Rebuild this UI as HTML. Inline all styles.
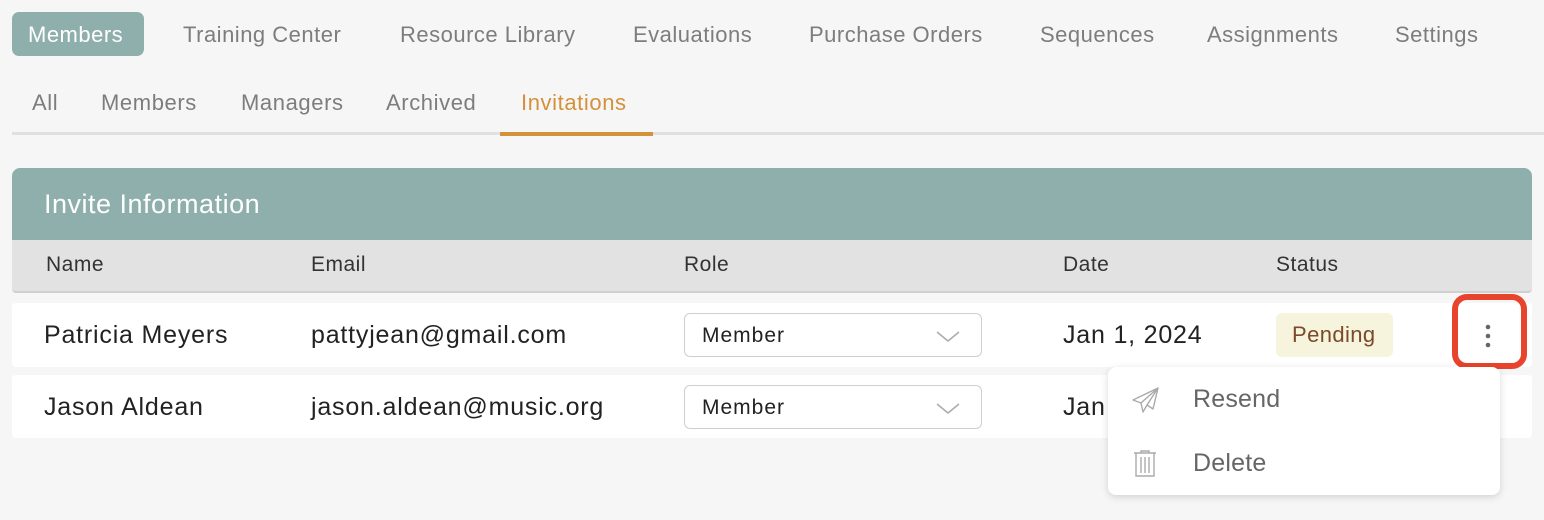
<!DOCTYPE html>
<html><head><style>
*{margin:0;padding:0;box-sizing:border-box}
body{width:1544px;height:520px;background:#f6f6f6;font-family:"Liberation Sans",sans-serif;position:relative;overflow:hidden}
.a{position:absolute;white-space:nowrap;line-height:1}
.nav{font-size:22px;letter-spacing:0.5px;color:#7d7d7d;top:24px}
.sub{font-size:22px;letter-spacing:0.6px;color:#7d7d7d;top:92px}
.th{font-size:21px;letter-spacing:0.5px;color:#333;top:254px}
.td{font-size:25px;letter-spacing:0.8px;color:#222}
.sel{position:absolute;left:684px;width:298px;height:44px;border:1.5px solid #cfcfcf;border-radius:6px;background:#fff}
.sel span{position:absolute;left:17px;top:10px;font-size:21px;letter-spacing:1px;color:#222}
.sel svg{position:absolute;left:250px;top:15px}
</style></head><body>
<div class="a" style="left:12px;top:12px;width:132px;height:44px;background:#8fafac;border-radius:7px"></div>
<div class="a nav" style="left:28px;color:#fff">Members</div>
<div class="a nav" style="left:183px">Training Center</div>
<div class="a nav" style="left:400px">Resource Library</div>
<div class="a nav" style="left:633px">Evaluations</div>
<div class="a nav" style="left:809px">Purchase Orders</div>
<div class="a nav" style="left:1040px">Sequences</div>
<div class="a nav" style="left:1207px">Assignments</div>
<div class="a nav" style="left:1395px">Settings</div>

<div class="a sub" style="left:32px">All</div>
<div class="a sub" style="left:101px">Members</div>
<div class="a sub" style="left:241px">Managers</div>
<div class="a sub" style="left:386px">Archived</div>
<div class="a sub" style="left:521px;color:#d4913a">Invitations</div>
<div class="a" style="left:12px;top:132px;width:1532px;height:3px;background:#e0e0e0"></div>
<div class="a" style="left:500px;top:132px;width:153px;height:4px;background:#d4913a"></div>

<div class="a" style="left:12px;top:168px;width:1520px;height:72px;background:#8fafac;border-radius:8px 8px 0 0"></div>
<div class="a" style="left:44px;top:191px;font-size:27px;letter-spacing:0.5px;color:#fff">Invite Information</div>
<div class="a" style="left:12px;top:240px;width:1520px;height:53px;background:#e2e2e2;border-bottom:2px solid #d0d0d0;border-radius:0 0 4px 4px"></div>
<div class="a th" style="left:46px">Name</div>
<div class="a th" style="left:311px">Email</div>
<div class="a th" style="left:684px">Role</div>
<div class="a th" style="left:1063px">Date</div>
<div class="a th" style="left:1276px">Status</div>

<div class="a" style="left:12px;top:303px;width:1520px;height:64px;background:#fff;border-radius:4px"></div>
<div class="a" style="left:12px;top:375px;width:1520px;height:63px;background:#fff;border-radius:4px"></div>
<div class="a td" style="left:44px;top:323px">Patricia Meyers</div>
<div class="a td" style="left:311px;top:323px">pattyjean@gmail.com</div>
<div class="sel" style="top:313px"><span>Member</span><svg width="26" height="14"><path d="M2 3 L13 12 L24 3" fill="none" stroke="#aaa" stroke-width="1.5"/></svg></div>
<div class="a td" style="left:1063px;top:323px">Jan 1, 2024</div>
<div class="a" style="left:1276px;top:313px;width:117px;height:44px;background:#f6f4dc;border-radius:6px"></div>
<div class="a" style="left:1292px;top:324px;font-size:22px;letter-spacing:0.4px;color:#7a4a2a">Pending</div>
<div class="a" style="left:1452px;top:294px;width:75px;height:75px;border:6px solid #e8432c;border-radius:15px"></div>
<svg class="a" style="left:1483px;top:322px" width="10" height="28"><circle cx="5" cy="5" r="2.3" fill="#666"/><circle cx="5" cy="14" r="2.3" fill="#666"/><circle cx="5" cy="23" r="2.3" fill="#666"/></svg>

<div class="a td" style="left:44px;top:395px">Jason Aldean</div>
<div class="a td" style="left:311px;top:395px">jason.aldean@music.org</div>
<div class="sel" style="top:385px"><span>Member</span><svg width="26" height="14"><path d="M2 3 L13 12 L24 3" fill="none" stroke="#aaa" stroke-width="1.5"/></svg></div>
<div class="a td" style="left:1063px;top:395px">Jan</div>

<div class="a" style="left:1108px;top:367px;width:392px;height:128px;background:#fff;border-radius:8px;box-shadow:0 2px 8px rgba(0,0,0,.15)"></div>
<svg class="a" style="left:1131px;top:386px" width="30" height="28"><path d="M27 2 L2 14 L10 17 Z M27 2 L10 17 L12 26 L16 19 Z M27 2 L16 19 L22 23 Z" fill="none" stroke="#aaa" stroke-width="1.4" stroke-linejoin="round"/></svg>
<div class="a" style="left:1193px;top:387px;font-size:25px;letter-spacing:0.2px;color:#666">Resend</div>
<svg class="a" style="left:1132px;top:450px" width="26" height="28"><path d="M2 3 H24 M9 3 V1 H17 V3 M4 3 V26 H22 V3 M9 7 V23 M13 7 V23 M17 7 V23" fill="none" stroke="#aaa" stroke-width="1.4"/></svg>
<div class="a" style="left:1193px;top:451px;font-size:25px;letter-spacing:0.2px;color:#666">Delete</div>
</body></html>
